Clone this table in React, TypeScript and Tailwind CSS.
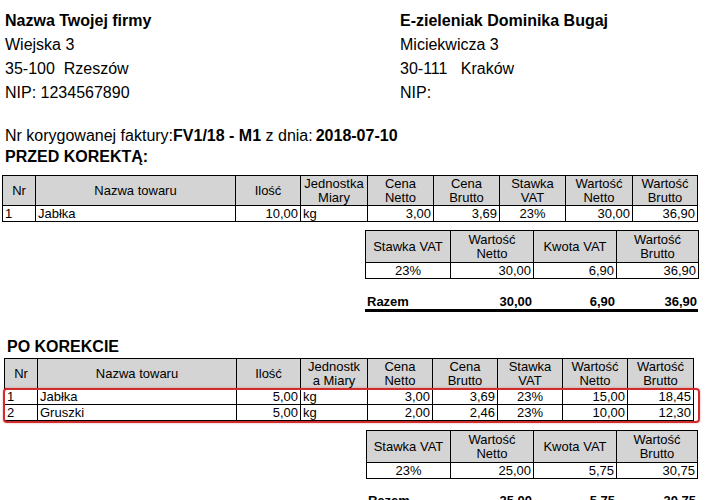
import React from "react";

type Row = (string | number)[];

const fontMain = { fontFamily: '"Liberation Sans", Arial, sans-serif' };

// column alignment for the item tables
const itemAlign = ["text-left", "text-left", "text-right", "text-left", "text-right", "text-right", "text-center", "text-right", "text-right"];
const sumAlign = ["text-center", "text-right", "text-right", "text-right"];

function ItemsTable({
    widths,
    headers,
    rows,
    className,
}: {
    widths: number[];
    headers: React.ReactNode[];
    rows: Row[];
    className?: string;
}) {
    const total = widths.reduce((a, b) => a + b, 0);
    return (
        <table
            className={"table-fixed border-collapse text-[13px] text-black " + (className ?? "")}
            style={{ width: total }}
        >
            <colgroup>
                {widths.map((w, i) => (
                    <col key={i} style={{ width: w }} />
                ))}
            </colgroup>
            <thead>
                <tr className="h-[30px] bg-[#d4d4d4]">
                    {headers.map((h, i) => (
                        <th key={i} className="border border-black font-normal text-center leading-[14px] px-0 py-0">
                            {h}
                        </th>
                    ))}
                </tr>
            </thead>
            <tbody>
                {rows.map((r, ri) => (
                    <tr key={ri} className="h-[16px]">
                        {r.map((c, ci) => (
                            <td
                                key={ci}
                                className={"border border-black leading-[14px] py-0 px-[2px] whitespace-nowrap " + itemAlign[ci]}
                            >
                                {c}
                            </td>
                        ))}
                    </tr>
                ))}
            </tbody>
        </table>
    );
}

function SummaryTable({ widths, values }: { widths: number[]; values: string[] }) {
    const total = widths.reduce((a, b) => a + b, 0);
    const headers = [
        "Stawka VAT",
        <>Wartość<br />Netto</>,
        "Kwota VAT",
        <>Wartość<br />Brutto</>,
    ];
    return (
        <table className="table-fixed border-collapse text-[13px] text-black" style={{ width: total }}>
            <colgroup>
                {widths.map((w, i) => (
                    <col key={i} style={{ width: w }} />
                ))}
            </colgroup>
            <thead>
                <tr className="h-[32px] bg-[#d4d4d4]">
                    {headers.map((h, i) => (
                        <th key={i} className="border border-black font-normal text-center leading-[14px] p-0">
                            {h}
                        </th>
                    ))}
                </tr>
            </thead>
            <tbody>
                <tr className="h-[16px]">
                    {values.map((v, i) => (
                        <td key={i} className={"border border-black leading-[14px] py-0 px-[2px] " + sumAlign[i]}>
                            {v}
                        </td>
                    ))}
                </tr>
            </tbody>
        </table>
    );
}

function Razem({ widths, values }: { widths: number[]; values: string[] }) {
    const total = widths.reduce((a, b) => a + b, 0);
    return (
        <div
            className="flex border-b-[3px] border-black text-[13px] font-bold leading-[14px] text-black"
            style={{ width: total }}
        >
            <div className="pl-[2px]" style={{ width: widths[0] }}>
                Razem
            </div>
            {values.map((v, i) => (
                <div key={i} className="text-right pr-[1px]" style={{ width: widths[i + 1] }}>
                    {v}
                </div>
            ))}
        </div>
    );
}

const headers1: React.ReactNode[] = [
    "Nr",
    "Nazwa towaru",
    "Ilość",
    <>Jednostka<br />Miary</>,
    <>Cena<br />Netto</>,
    <>Cena<br />Brutto</>,
    <>Stawka<br />VAT</>,
    <>Wartość<br />Netto</>,
    <>Wartość<br />Brutto</>,
];

const headers2: React.ReactNode[] = [
    "Nr",
    "Nazwa towaru",
    "Ilość",
    <>Jednostk<br />a Miary</>,
    <>Cena<br />Netto</>,
    <>Cena<br />Brutto</>,
    <>Stawka<br />VAT</>,
    <>Wartość<br />Netto</>,
    <>Wartość<br />Brutto</>,
];

export default function App() {
    return (
        <div className="w-[708px] h-[500px] overflow-hidden bg-white text-black" style={fontMain}>
            {/* Seller / buyer */}
            <div className="flex pt-[8px] text-[16px]">
                <div className="w-[400px] pl-[5px]">
                    <div className="font-bold leading-[25px]">Nazwa Twojej firmy</div>
                    <div className="leading-[24px]">Wiejska 3</div>
                    <div className="leading-[24px] whitespace-pre">35-100  Rzeszów</div>
                    <div className="leading-[24px]">NIP: 1234567890</div>
                </div>
                <div>
                    <div className="font-bold leading-[25px]">E-zieleniak Dominika Bugaj</div>
                    <div className="leading-[24px]">Miciekwicza 3</div>
                    <div className="leading-[24px] whitespace-pre">30-111   Kraków</div>
                    <div className="leading-[24px]">NIP:</div>
                </div>
            </div>

            <div className="mt-[20px] pl-[5px] text-[16px] leading-[22px]">
                Nr korygowanej faktury:<span className="font-bold">FV1/18 - M1</span>
                {"  "}z dnia:<span className="font-bold ml-[3px]">2018-07-10</span>
            </div>

            {/* Before correction */}
            <div className="pl-[5px] text-[16px] font-bold leading-[20px]">PRZED KOREKTĄ:</div>
            <ItemsTable
                className="mt-[8px] ml-[2px]"
                widths={[33, 200, 65, 67, 66, 66, 66, 67, 65]}
                headers={headers1}
                rows={[["1", "Jabłka", "10,00", "kg", "3,00", "3,69", "23%", "30,00", "36,90"]]}
            />
            <div className="mt-[8px] ml-[365px]">
                <SummaryTable widths={[85, 83, 83, 82]} values={["23%", "30,00", "6,90", "36,90"]} />
                <div className="mt-[16px]">
                    <Razem widths={[85, 83, 83, 82]} values={["30,00", "6,90", "36,90"]} />
                </div>
            </div>

            {/* After correction */}
            <div className="mt-[25px] pl-[7px] text-[16px] font-bold leading-[20px]">PO KOREKCIE</div>
            <div className="relative mt-[1px] ml-[4px] w-fit">
                <ItemsTable
                    widths={[33, 199, 64, 67, 65, 65, 65, 65, 66]}
                    headers={headers2}
                    rows={[
                        ["1", "Jabłka", "5,00", "kg", "3,00", "3,69", "23%", "15,00", "18,45"],
                        ["2", "Gruszki", "5,00", "kg", "2,00", "2,46", "23%", "10,00", "12,30"],
                    ]}
                />
                <div className="absolute left-[-1px] right-[-6px] top-[30px] bottom-[-2px] rounded-[4px] border-2 border-[#d02c2c] shadow-[0_0_2px_rgba(208,44,44,0.5)] pointer-events-none" />
            </div>
            <div className="mt-[9px] ml-[366px]">
                <SummaryTable widths={[84, 83, 83, 81]} values={["23%", "25,00", "5,75", "30,75"]} />
                <div className="mt-[15px]">
                    <Razem widths={[84, 83, 83, 81]} values={["25,00", "5,75", "30,75"]} />
                </div>
            </div>
        </div>
    );
}
